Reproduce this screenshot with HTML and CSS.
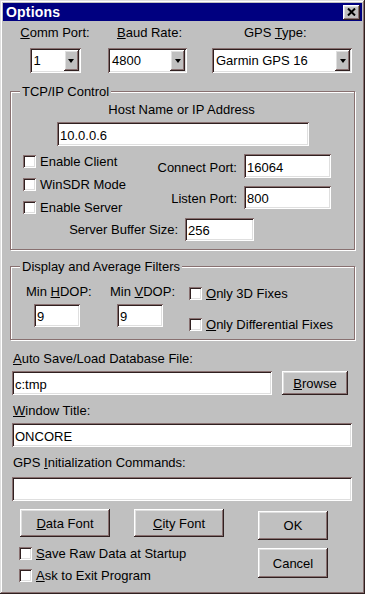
FILE: index.html
```html
<!DOCTYPE html>
<html lang="en">
<head>
    <meta charset="UTF-8">
    <meta name="viewport" content="width=device-width, initial-scale=1.0">
    <title>Options</title>
    <link rel="stylesheet" href="styles.css">
</head>
<body>
    <div class="window">
        <div class="titlebar">
            <span class="title">Options</span>
            <span class="close-btn">
                <svg width="9" height="8" viewBox="0 0 9 8">
                    <path d="M1 0.5 L8 7.5 M8 0.5 L1 7.5" stroke="#000" stroke-width="2"/>
                </svg>
            </span>
        </div>

        <div class="content">
            <!-- serial port settings -->
            <div class="port-row">
                <div class="port-col comm">
                    <div class="label"><u>C</u>omm Port:</div>
                    <div class="combo sunken">
                        <span class="combo-value">1</span>
                        <span class="combo-arrow raised"><i></i></span>
                    </div>
                </div>
                <div class="port-col baud">
                    <div class="label"><u>B</u>aud Rate:</div>
                    <div class="combo sunken">
                        <span class="combo-value">4800</span>
                        <span class="combo-arrow raised"><i></i></span>
                    </div>
                </div>
                <div class="port-col gps">
                    <div class="label">GPS <u>T</u>ype:</div>
                    <div class="combo sunken">
                        <span class="combo-value">Garmin GPS 16</span>
                        <span class="combo-arrow raised"><i></i></span>
                    </div>
                </div>
            </div>

            <fieldset class="group tcp-group">
                <legend>TCP/IP Control</legend>
                <div class="host-label">Host Name or IP Address</div>
                <input class="field sunken host-input" type="text" value="10.0.0.6">

                <div class="tcp-grid">
                    <div class="tcp-checks">
                        <div class="check-row"><span class="check sunken"></span>Enable Client</div>
                        <div class="check-row"><span class="check sunken"></span>WinSDR Mode</div>
                        <div class="check-row"><span class="check sunken"></span>Enable Server</div>
                    </div>
                    <div class="tcp-ports">
                        <div class="port-field">
                            <span class="port-label">Connect Port:</span>
                            <input class="field sunken port-input" type="text" value="16064">
                        </div>
                        <div class="port-field listen">
                            <span class="port-label">Listen Port:</span>
                            <input class="field sunken port-input short" type="text" value="800">
                        </div>
                    </div>
                </div>

                <div class="buffer-row">
                    <span class="buffer-label">Server Buffer Size:</span>
                    <input class="field sunken buffer-input" type="text" value="256">
                </div>
            </fieldset>

            <fieldset class="group filter-group">
                <legend>Display and Average Filters</legend>
                <div class="filter-row">
                    <div class="dop-col hdop">
                        <div class="label">Min <u>H</u>DOP:</div>
                        <input class="field sunken dop-input" type="text" value="9">
                    </div>
                    <div class="dop-col vdop">
                        <div class="label">Min <u>V</u>DOP:</div>
                        <input class="field sunken dop-input" type="text" value="9">
                    </div>
                    <div class="filter-checks">
                        <div class="check-row"><span class="check sunken"></span><span><u>O</u>nly 3D Fixes</span></div>
                        <div class="check-row"><span class="check sunken"></span><span><u>O</u>nly Differential Fixes</span></div>
                    </div>
                </div>
            </fieldset>

            <div class="label file-label"><u>A</u>uto Save/Load Database File:</div>
            <div class="file-row">
                <input class="field sunken file-input" type="text" value="c:tmp">
                <button class="btn raised browse-btn"><u>B</u>rowse</button>
            </div>

            <div class="label file-label title-label"><u>W</u>indow Title:</div>
            <input class="field sunken wide-input" type="text" value="ONCORE">

            <div class="label file-label title-label">GPS <u>I</u>nitialization Commands:</div>
            <input class="field sunken wide-input init-input" type="text" value="">

            <div class="bottom-area">
                <div class="bottom-left">
                    <div class="font-buttons">
                        <button class="btn raised font-btn"><u>D</u>ata Font</button>
                        <button class="btn raised font-btn city"><u>C</u>ity Font</button>
                    </div>
                    <div class="bottom-checks">
                        <div class="check-row"><span class="check sunken"></span><span><u>S</u>ave Raw Data at Startup</span></div>
                        <div class="check-row"><span class="check sunken"></span><span><u>A</u>sk to Exit Program</span></div>
                    </div>
                </div>
                <div class="bottom-right">
                    <button class="btn raised ok-btn">OK</button>
                    <button class="btn raised cancel-btn">Cancel</button>
                </div>
            </div>
        </div>
    </div>
</body>
</html>
```

FILE: styles.css
```css
* {
    margin: 0;
    padding: 0;
    box-sizing: border-box;
}

body {
    font-family: "Liberation Sans", Arial, sans-serif;
    font-size: 13px;
    line-height: 15px;
    color: #000;
    background: #c0c0c0;
}

u {
    text-decoration: underline;
    text-underline-offset: 1px;
}

/* 3d edges */
.sunken {
    background: #fff;
    box-shadow: inset 1px 1px #887070, inset -1px -1px #fff, inset 2px 2px #302020, inset -2px -2px #dfdfdf;
}

.raised {
    background: #c0c0c0;
    box-shadow: inset -1px -1px #302020, inset 1px 1px #fff, inset -2px -2px #887070, inset 2px 2px #dfdfdf;
}

.window {
    width: 365px;
    height: 594px;
    padding: 3px;
    background: #c0c0c0;
    box-shadow: inset -1px -1px #302020, inset 1px 1px #dfdfdf, inset -2px -2px #887070, inset 2px 2px #fff;
}

.titlebar {
    height: 18px;
    background: #000080;
    display: flex;
    align-items: center;
    justify-content: space-between;
    padding-left: 3px;
}

.title {
    color: #fff;
    font-weight: bold;
    font-size: 14px;
    letter-spacing: 0.2px;
}

.close-btn {
    width: 17px;
    height: 15px;
    margin-right: 2px;
    display: flex;
    align-items: center;
    justify-content: center;
    background: #c0c0c0;
    box-shadow: inset -1px -1px #302020, inset 1px 1px #fff, inset -2px -2px #887070, inset 2px 2px #dfdfdf;
}

.label {
    height: 15px;
    white-space: nowrap;
}

/* top row */
.port-row {
    display: flex;
    margin-top: 4px;
}

.port-col {
    display: flex;
    flex-direction: column;
}

.port-col .combo {
    margin-top: 8px;
}

.comm {
    margin-left: 17px;
    width: 70px;
    align-items: center;
}

.comm .combo {
    width: 51px;
}

.baud {
    margin-left: 18px;
    width: 79px;
}

.baud .label {
    padding-left: 9px;
}

.gps {
    margin-left: 25px;
    width: 140px;
}

.gps .label {
    padding-left: 32px;
}

.combo {
    height: 25px;
    display: flex;
    align-items: center;
    justify-content: space-between;
    padding: 2px 2px 2px 4px;
}

.combo-arrow {
    width: 15px;
    height: 21px;
    display: flex;
    align-items: center;
    justify-content: center;
}

.combo-arrow i {
    width: 0;
    height: 0;
    border-left: 3.5px solid transparent;
    border-right: 3.5px solid transparent;
    border-top: 4px solid #000;
    margin-top: 1px;
}

/* group boxes */
.group {
    margin-left: 7px;
    width: 345px;
    border: 1px solid #887070;
    box-shadow: inset 1px 1px #fff, 1px 1px #fff;
    padding: 0 0 8px 0;
}

.group legend {
    margin-left: 9px;
    padding: 0 2px;
    background: #c0c0c0;
    line-height: 15px;
}

.tcp-group {
    margin-top: 11px;
}

.host-label {
    text-align: center;
    margin-top: 3px;
    padding-right: 2px;
}

.field {
    border: none;
    outline: none;
    font: inherit;
    color: #000;
    padding: 2px 2px 0 3px;
    height: 24px;
    display: block;
}

.host-input {
    width: 252px;
    margin: 5px 0 0 46px;
}

.tcp-grid {
    display: flex;
    margin-top: 8px;
}

.tcp-checks {
    margin-left: 12px;
    width: 134px;
    display: flex;
    flex-direction: column;
    gap: 8px;
}

.check-row {
    display: flex;
    align-items: center;
    height: 15px;
    white-space: nowrap;
}

.check {
    width: 13px;
    height: 13px;
    margin-right: 4px;
    flex-shrink: 0;
}

.tcp-ports {
    display: flex;
    flex-direction: column;
}

.port-field {
    display: flex;
    align-items: center;
}

.port-field.listen {
    margin-top: 8px;
}

.port-label {
    width: 80px;
    text-align: right;
    margin-right: 7px;
    padding-top: 2px;
}

.port-input {
    width: 87px;
}

.port-input.short {
    height: 23px;
}

.buffer-row {
    display: flex;
    align-items: center;
    margin-top: 3px;
}

.buffer-label {
    width: 167px;
    text-align: right;
    margin-right: 7px;
}

.buffer-input {
    width: 69px;
    height: 23px;
}

/* filters */
.filter-group {
    margin-top: 9px;
    padding-bottom: 7px;
}

.filter-row {
    display: flex;
}

.dop-col {
    margin-top: 10px;
}

.hdop {
    margin-left: 15px;
    width: 84px;
}

.vdop {
    width: 79px;
}

.dop-input {
    width: 46px;
    height: 23px;
    margin: 5px 0 0 8px;
}

.vdop .dop-input {
    margin-left: 7px;
}

.filter-checks {
    margin-top: 12px;
    display: flex;
    flex-direction: column;
    gap: 16px;
}

/* lower fields */
.file-label {
    margin: 11px 0 0 10px;
}

.title-label {
    margin-top: 8px;
}

.file-row {
    display: flex;
    margin-top: 5px;
}

.file-input {
    width: 260px;
    margin-left: 9px;
}

.btn {
    border: none;
    font: inherit;
    color: #000;
    display: flex;
    align-items: center;
    justify-content: center;
}

.browse-btn {
    width: 66px;
    height: 24px;
    margin-left: 10px;
}

.wide-input {
    width: 340px;
    margin: 5px 0 0 9px;
}

.init-input {
    margin-top: 7px;
}

.bottom-area {
    display: flex;
    margin-top: 8px;
}

.bottom-left {
    margin-left: 17px;
}

.font-buttons {
    display: flex;
    gap: 24px;
}

.font-btn {
    width: 90px;
    height: 28px;
}

.bottom-checks {
    margin: 9px 0 0 -1px;
    display: flex;
    flex-direction: column;
    gap: 7px;
}

.bottom-right {
    margin-left: 34px;
    display: flex;
    flex-direction: column;
}

.ok-btn {
    width: 70px;
    height: 29px;
    margin-top: 2px;
}

.cancel-btn {
    width: 70px;
    height: 30px;
    margin-top: 8px;
}
```
